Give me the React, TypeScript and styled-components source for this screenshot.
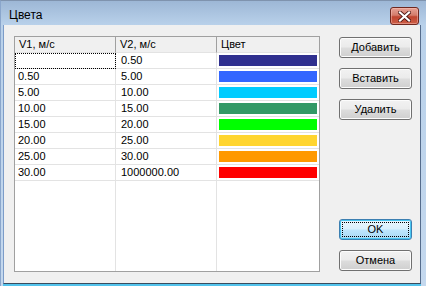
import { Fragment } from 'react';
import styled, { createGlobalStyle, css } from 'styled-components';

type Row = {
  v1: string;
  v2: string;
  color: string;
};

const rows: Row[] = [
  { v1: '', v2: '0.50', color: '#30308f' },
  { v1: '0.50', v2: '5.00', color: '#3366ff' },
  { v1: '5.00', v2: '10.00', color: '#00ccff' },
  { v1: '10.00', v2: '15.00', color: '#339966' },
  { v1: '15.00', v2: '20.00', color: '#00ff00' },
  { v1: '20.00', v2: '25.00', color: '#ffd52f' },
  { v1: '25.00', v2: '30.00', color: '#ff9900' },
  { v1: '30.00', v2: '1000000.00', color: '#ff0000' },
];

const GlobalStyle = createGlobalStyle`
  html, body {
    margin: 0;
    padding: 0;
    background: #ffffff;
  }
  body {
    font-family: "Liberation Sans", Arial, sans-serif;
    font-size: 11px;
    color: #000;
  }
`;

const Window = styled.div`
  box-sizing: border-box;
  width: 426px;
  height: 286px;
  display: flex;
  flex-direction: column;
  background: linear-gradient(#9db7d6, #b9d1ea 24px, #c4d8ee);
  border-left: 1px solid #8aa6cc;
  border-top: 1px solid #7f93ae;
  padding: 0 5px 0 2px;
  overflow: hidden;
`;

const TitleBar = styled.div`
  height: 24px;
  flex: none;
  display: flex;
  align-items: center;
  justify-content: space-between;
  padding: 0 2px 0 6px;
`;

const Title = styled.span`
  font-size: 12px;
  color: #000;
  margin-top: 3px;
`;

const CloseButton = styled.div`
  box-sizing: border-box;
  width: 29px;
  height: 18px;
  margin-top: 6px;
  border: 1px solid #6e2820;
  border-radius: 3px;
  background: linear-gradient(#e6a296, #d47c6b 45%, #c0442f 55%, #cc5f48);
  box-shadow: inset 0 0 0 1px rgba(255, 200, 190, 0.45);
  display: flex;
  align-items: center;
  justify-content: center;
`;

const Client = styled.div`
  flex: 1;
  display: flex;
  gap: 19px;
  background: #f0f0f0;
  border-left: 1px solid #7c9cc8;
  border-right: 1px solid #556c8c;
  border-bottom: 1px solid #3a4b5e;
  padding: 11px 8px 11px 10px;
  box-shadow: 0 2px 0 #52c3ec;
  margin-bottom: 2px;
`;

const Grid = styled.div`
  box-sizing: border-box;
  width: 306px;
  height: 236px;
  border: 1px solid #a0a0a0;
  background: #fff;
  display: grid;
  grid-template-columns: 101px 101px 102px;
  grid-template-rows: repeat(9, 16px) 1fr;
`;

const HeadCell = styled.div<{ $last?: boolean }>`
  box-sizing: border-box;
  background: #f0f0f0;
  border-bottom: 1px solid #e3e3e3;
  border-right: ${p => (p.$last ? 'none' : '1px solid #a0a0a0')};
  padding-left: 4px;
  line-height: 15px;
  white-space: nowrap;
`;

const Cell = styled.div<{ $last?: boolean; $pad?: number; $focus?: boolean }>`
  box-sizing: border-box;
  border-bottom: 1px solid #e3e3e3;
  border-right: ${p => (p.$last ? 'none' : '1px solid #e3e3e3')};
  padding-left: ${p => p.$pad ?? 3}px;
  line-height: 15px;
  white-space: nowrap;
  ${p =>
    p.$focus &&
    css`
      outline: 1px dotted #000;
      outline-offset: -1px;
    `}
`;

const ColorCell = styled(Cell)`
  padding: 2px;
  border-right: none;
`;

const Swatch = styled.div<{ $color: string }>`
  height: 11px;
  background: ${p => p.$color};
`;

const Filler = styled.div<{ $last?: boolean }>`
  border-right: ${p => (p.$last ? 'none' : '1px solid #e3e3e3')};
`;

const ButtonColumn = styled.div`
  width: 73px;
  display: flex;
  flex-direction: column;
  gap: 10px;
  padding: 1px 0;
`;

const Button = styled.div<{ $primary?: boolean; $push?: boolean }>`
  box-sizing: border-box;
  height: 21px;
  border: 1px solid #707070;
  border-radius: 3px;
  background: linear-gradient(#f2f2f2, #ebebeb 48%, #dddddd 52%, #cfcfcf);
  box-shadow: inset 0 0 0 1px #fcfcfc;
  display: flex;
  align-items: center;
  justify-content: center;
  position: relative;
  line-height: 1;
  ${p =>
    p.$push &&
    css`
      margin-top: auto;
    `}
  ${p =>
    p.$primary &&
    css`
      border-color: #3c7fb1;
      background: linear-gradient(#eaf6fd, #d9f0fc 48%, #bee6fd 52%, #a7d9f5);
      box-shadow: inset 0 0 0 1px #48c6f0;
      &::after {
        content: '';
        position: absolute;
        inset: 2px;
        border: 1px dotted #000;
      }
    `}
`;

function CloseGlyph() {
  return (
    <svg width="13" height="11" viewBox="0 0 13 11">
      <path
        d="M2 1.5 L11 9.5 M11 1.5 L2 9.5"
        stroke="#4a1410"
        strokeWidth="3.8"
        strokeLinecap="square"
      />
      <path
        d="M2 1.5 L11 9.5 M11 1.5 L2 9.5"
        stroke="#ffffff"
        strokeWidth="2.2"
        strokeLinecap="square"
      />
    </svg>
  );
}

export default function App() {
  return (
    <>
      <GlobalStyle />
      <Window>
        <TitleBar>
          <Title>Цвета</Title>
          <CloseButton>
            <CloseGlyph />
          </CloseButton>
        </TitleBar>
        <Client>
          <Grid>
            <HeadCell>V1, м/с</HeadCell>
            <HeadCell>V2, м/с</HeadCell>
            <HeadCell $last>Цвет</HeadCell>
            {rows.map((row, i) => (
              <Fragment key={i}>
                <Cell $focus={i === 0}>{row.v1}</Cell>
                <Cell $pad={5}>{row.v2}</Cell>
                <ColorCell $last>
                  <Swatch $color={row.color} />
                </ColorCell>
              </Fragment>
            ))}
            <Filler />
            <Filler />
            <Filler $last />
          </Grid>
          <ButtonColumn>
            <Button>Добавить</Button>
            <Button>Вставить</Button>
            <Button>Удалить</Button>
            <Button $primary $push>
              OK
            </Button>
            <Button>Отмена</Button>
          </ButtonColumn>
        </Client>
      </Window>
    </>
  );
}
